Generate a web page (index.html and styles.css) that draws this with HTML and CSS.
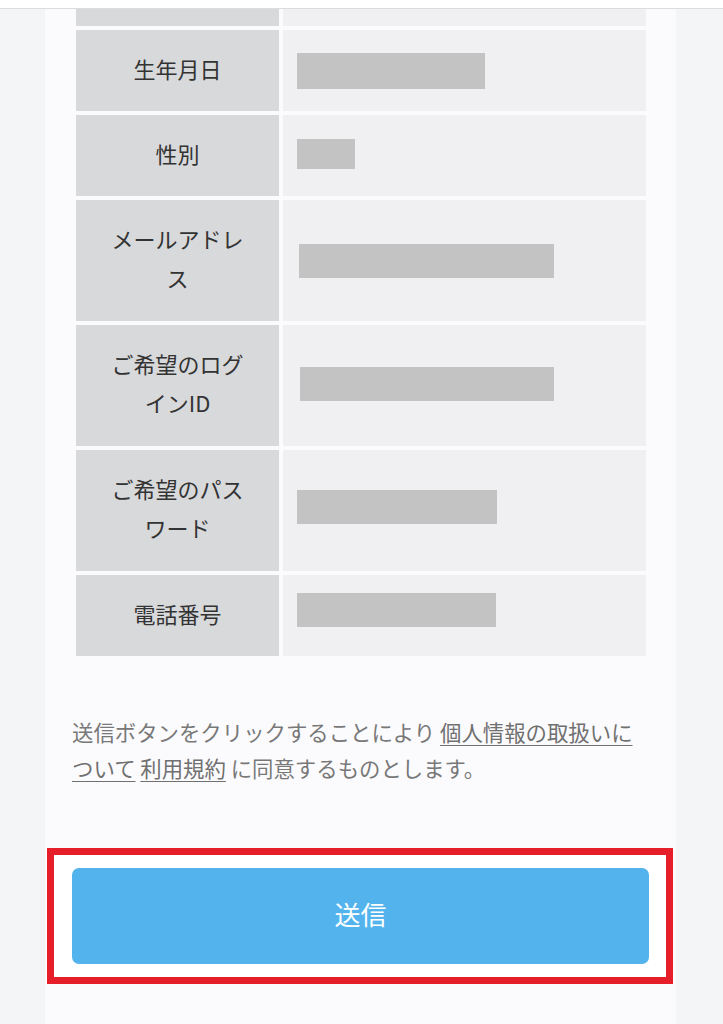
FILE: index.html
```html
<!DOCTYPE html>
<html lang="ja">
<head>
<meta charset="utf-8">
<title>送信確認</title>
<link rel="stylesheet" href="styles.css">
</head>
<body>
<div class="topbar"></div>
<main class="panel">
  <div class="form-table">
    <div class="label partial"></div><div class="value partial"></div>
    <div class="label">生年月日</div><div class="value"><span class="bar" style="width:188px;height:36px"></span></div>
    <div class="label">性別</div><div class="value"><span class="bar bar-up2" style="width:58px;height:30px"></span></div>
    <div class="label tall">メールアドレス</div><div class="value tall"><span class="bar bar-in" style="width:255px;height:34px"></span></div>
    <div class="label tall">ご希望のログインID</div><div class="value tall"><span class="bar bar-in2 bar-up4" style="width:254px;height:34px"></span></div>
    <div class="label tall">ご希望のパスワード</div><div class="value tall"><span class="bar bar-up8" style="width:200px;height:34px"></span></div>
    <div class="label">電話番号</div><div class="value"><span class="bar bar-up9" style="width:199px;height:34px"></span></div>
  </div>
  <p class="agree">送信ボタンをクリックすることにより <a href="#">個人情報の取扱いについて</a> <a href="#">利用規約</a> に同意するものとします。</p>
  <div class="highlight">
    <button class="submit" type="button">送信</button>
  </div>
</main>
</body>
</html>
```

FILE: styles.css
```css
html, body {
  margin: 0;
  padding: 0;
}
body {
  background: #f4f5f7;
  font-family: "Noto Sans CJK JP", "Noto Sans", sans-serif;
  height: 1024px;
  overflow: hidden;
}
.topbar {
  height: 8px;
  background: #ffffff;
  border-bottom: 1px solid #dcdcdc;
}
.panel {
  display: block;
  width: 631px;
  margin-left: 45px;
  background: #fbfbfd;
  min-height: 1015px;
  box-sizing: border-box;
  padding: 0 30px 0 0;
}
.form-table {
  display: grid;
  grid-template-columns: 203px 363px;
  column-gap: 4px;
  row-gap: 4px;
  margin-left: 31px;
}
.label {
  background: #d8d9db;
  color: #333;
  font-size: 22px;
  line-height: 39px;
  text-align: center;
  padding: 19px 30px;
  height: 81px;
  box-sizing: border-box;
}
.value {
  background: #f0f0f2;
  display: flex;
  align-items: center;
  padding-left: 14px;
  height: 81px;
  box-sizing: border-box;
}
.label.tall, .value.tall {
  height: 121px;
}
.label.partial, .value.partial {
  height: 17px;
  padding: 0;
}
.bar {
  display: block;
  background: #c3c3c3;
}
.bar-in { margin-left: 2px; }
.bar-in2 { margin-left: 3px; }
.bar-up2 { margin-bottom: 4px; }
.bar-up4 { margin-bottom: 4px; }
.bar-up8 { margin-bottom: 8px; }
.bar-up9 { margin-bottom: 12px; }
.agree {
  margin: 58px 0 0 27px;
  width: 570px;
  font-size: 21.4px;
  line-height: 36px;
  color: #787878;
}
.agree a {
  color: #707070;
  text-decoration: underline;
  text-underline-offset: 4px;
  text-decoration-thickness: 1px;
}
.highlight {
  margin: 62px 0 0 2px;
  width: 626px;
  box-sizing: border-box;
  border: 7px solid #e51e29;
  background: #ffffff;
  padding: 13px 17px 13px 18px;
}
.submit {
  display: block;
  width: 100%;
  height: 96px;
  border: none;
  border-radius: 7px;
  background: #53b4ed;
  color: #ffffff;
  font-family: "Noto Sans CJK JP", "Noto Sans", sans-serif;
  font-size: 26px;
  padding: 0 0 5px;
  cursor: pointer;
}
```
